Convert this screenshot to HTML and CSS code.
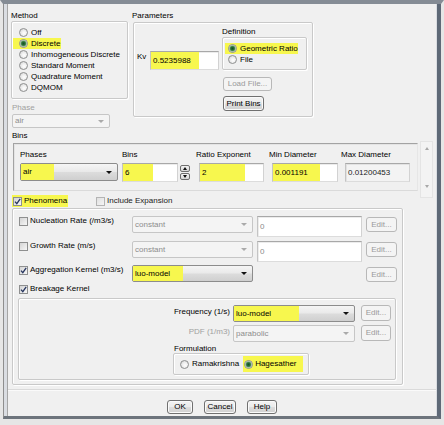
FILE: index.html
```html
<!DOCTYPE html>
<html>
<head>
<meta charset="utf-8">
<link rel="stylesheet" href="styles.css">
</head>
<body>
<div class="window">
  <div class="frame">
    <div class="client">

      <div class="top">
        <div class="col-method">
          <div class="glabel">Method</div>
          <div class="gbox method-box">
            <div class="opt"><span class="radio"></span><span>Off</span></div>
            <div class="opt"><span class="hl hl-radio"><span class="radio on"></span><span>Discrete</span></span></div>
            <div class="opt"><span class="radio"></span><span>Inhomogeneous Discrete</span></div>
            <div class="opt"><span class="radio"></span><span>Standard Moment</span></div>
            <div class="opt"><span class="radio"></span><span>Quadrature Moment</span></div>
            <div class="opt"><span class="radio"></span><span>DQMOM</span></div>
          </div>
          <div class="glabel dis phase-label">Phase</div>
          <div class="combo disabled phase-combo"><span class="ctext">air</span><span class="arrow"></span></div>
        </div>

        <div class="col-params">
          <div class="glabel params-label">Parameters</div>
          <div class="gbox params-box">
            <div class="kv">
              <span class="kv-label">Kv</span>
              <div class="tb kv-tb"><span class="tbhl kv-hl">0.5235988</span></div>
            </div>
            <div class="def">
              <div class="glabel">Definition</div>
              <div class="gbox def-box">
                <div class="opt"><span class="hl hl-radio def-hl"><span class="radio on"></span><span>Geometric Ratio</span></span></div>
                <div class="opt"><span class="radio"></span><span>File</span></div>
              </div>
              <div class="btn disabled load-btn">Load File...</div>
              <div class="btn print-btn">Print Bins</div>
            </div>
          </div>
        </div>
      </div>

      <div class="glabel bins-label">Bins</div>
      <div class="bins-wrap">
        <div class="bins-panel">
          <div class="bcol col-phases">
            <div class="blabel">Phases</div>
            <div class="combo phases-combo"><span class="tbhl phases-hl">air</span><span class="fill"></span><span class="arrow"></span></div>
          </div>
          <div class="bcol col-bins">
            <div class="blabel">Bins</div>
            <div class="tb btb"><span class="tbhl bins-hl">6</span></div>
          </div>
          <div class="spinner">
            <div class="spin"><span class="tri-up"></span></div>
            <div class="spin"><span class="tri-down"></span></div>
          </div>
          <div class="bcol col-ratio">
            <div class="blabel shift3">Ratio Exponent</div>
            <div class="tb btb"><span class="tbhl ratio-hl">2</span></div>
          </div>
          <div class="bcol col-min">
            <div class="blabel shift3">Min Diameter</div>
            <div class="tb btb"><span class="tbhl min-hl">0.001191</span></div>
          </div>
          <div class="bcol col-max">
            <div class="blabel shift4">Max Diameter</div>
            <div class="tb btb ro"><span class="tbtext">0.01200453</span></div>
          </div>
        </div>
        <div class="vscroll"><span class="sarrow-up"></span><span class="sarrow-down"></span></div>
      </div>

      <div class="phen-row">
        <div class="phen-first">
          <span class="hl hl-check"><span class="chk on"><svg viewBox="0 0 7 7" width="7" height="7"><path d="M1 3.6 L2.8 5.6 L6.2 0.8" stroke="#26355f" stroke-width="1.3" fill="none"/></svg></span><span>Phenomena</span></span>
        </div>
        <span class="chk dimchk"></span><span class="inc-text">Include Expansion</span>
      </div>

      <div class="gbox phen-box">
        <div class="prow">
          <div class="pcheck"><span class="chk"></span><span>Nucleation Rate (/m3/s)</span></div>
          <div class="combo disabled pcombo"><span class="ctext">constant</span><span class="arrow"></span></div>
          <div class="tb ptb"><span class="tbtext gray">0</span></div>
          <div class="btn disabled edit-btn">Edit...</div>
        </div>
        <div class="prow row2">
          <div class="pcheck"><span class="chk"></span><span>Growth Rate (m/s)</span></div>
          <div class="combo disabled pcombo"><span class="ctext">constant</span><span class="arrow"></span></div>
          <div class="tb ptb"><span class="tbtext gray">0</span></div>
          <div class="btn disabled edit-btn">Edit...</div>
        </div>
        <div class="prow row3">
          <div class="pcheck"><span class="chk on"><svg viewBox="0 0 7 7" width="7" height="7"><path d="M1 3.6 L2.8 5.6 L6.2 0.8" stroke="#26355f" stroke-width="1.3" fill="none"/></svg></span><span>Aggregation Kernel (m3/s)</span></div>
          <div class="combo pcombo"><span class="tbhl agg-hl">luo-model</span><span class="fill"></span><span class="arrow"></span></div>
          <div class="tb-spacer"></div>
          <div class="btn disabled edit-btn edit3">Edit...</div>
        </div>
        <div class="prow row4">
          <div class="pcheck"><span class="chk on"><svg viewBox="0 0 7 7" width="7" height="7"><path d="M1 3.6 L2.8 5.6 L6.2 0.8" stroke="#26355f" stroke-width="1.3" fill="none"/></svg></span><span>Breakage Kernel</span></div>
        </div>

        <div class="gbox brk-box">
          <div class="brow">
            <div class="blbl">Frequency (1/s)</div>
            <div class="combo bcombo"><span class="tbhl freq-hl">luo-model</span><span class="fill"></span><span class="arrow"></span></div>
            <div class="btn disabled bedit">Edit...</div>
          </div>
          <div class="brow pdf-row">
            <div class="blbl dis">PDF (1/m3)</div>
            <div class="combo disabled bcombo"><span class="ctext">parabolic</span><span class="arrow"></span></div>
            <div class="btn disabled bedit">Edit...</div>
          </div>
          <div class="form-label">Formulation</div>
          <div class="gbox form-box">
            <span class="radio"></span><span class="ram">Ramakrishna</span>
            <span class="hl hl-radio hag-hl"><span class="radio on"></span><span>Hagesather</span></span>
          </div>
        </div>
      </div>

      <div class="footer">
        <div class="btn ok-btn">OK</div>
        <div class="btn cancel-btn">Cancel</div>
        <div class="btn help-btn">Help</div>
      </div>

    </div>
  </div>
</div>
</body>
</html>
```

FILE: styles.css
```css
* { box-sizing: border-box; }
html, body { margin: 0; padding: 0; }
body {
  width: 444px;
  height: 425px;
  overflow: hidden;
  font-family: "Liberation Sans", Arial, sans-serif;
  font-size: 8px;
  line-height: 10px;
  color: #000;
  background: #e9e9e9;
}

/* window frame */
.window {
  width: 444px;
  height: 425px;
  display: flex;
  background: #e9e9e9;
  border-top: 4px solid #858c95;
  border-left: 3px solid #e6e6e6;
  border-right: 3px solid #e6e6e6;
  border-bottom: 6px solid #e6e6e6;
}
.frame {
  flex: 1;
  display: flex;
  background: #dadde2;
  border-left: 1px solid #8e8e8e;
  border-right: 4px solid #5e6977;
  border-bottom: 3px solid #6d747c;
  padding: 0 1px 0 3px;
}
.client {
  flex: 1;
  background: #f0f0f0;
  border-left: 1px solid #a5a5a5;
  overflow: hidden;
}

/* generic */
.glabel { line-height: 10px; height: 10px; white-space: nowrap; }
.dis { color: #a0a0a0; }
.gbox {
  border: 1px solid #c9c9c9;
  border-radius: 2px;
  box-shadow: inset 1px 1px 0 #fff, 1px 1px 0 #fff;
}
.opt { display: flex; align-items: center; height: 11px; white-space: nowrap; }
.hl { background: #f7f74e; }
.radio {
  display: inline-block;
  flex: none;
  width: 9px;
  height: 9px;
  border-radius: 50%;
  border: 1px solid #8e8f8f;
  background: radial-gradient(circle at 60% 60%, #ffffff 0, #f0f0f0 40%, #cfcfcf 100%);
  margin-right: 3px;
}
.radio.on {
  background: radial-gradient(circle, #174d24 0, #276f35 1.6px, #5f9a66 2.6px, #dfe8da 3.4px, #f4f4f4 4px);
}
.hl-radio {
  display: inline-flex;
  align-items: center;
  height: 11px;
  padding: 0 1px 0 6px;
  margin-left: -6px;
}
.chk {
  display: inline-flex;
  align-items: center;
  justify-content: center;
  flex: none;
  width: 9px;
  height: 9px;
  border: 1px solid #8e8f8f;
  background: linear-gradient(135deg, #d4d4d4, #f7f7f7);
  margin-right: 2px;
}
.chk svg { display: block; }
.dimchk { border-color: #b4b4b4; background: linear-gradient(135deg, #e0e0e0, #f5f5f5); }

.tb {
  display: flex;
  align-items: stretch;
  background: #fff;
  border: 1px solid;
  border-color: #a8a8a8 #d2d2d2 #dcdcdc #c4c4c4;
  box-shadow: inset 1px 1px 0 #ececec;
}
.tbhl {
  display: flex;
  align-items: center;
  background: #f7f74e;
  padding-left: 2px;
  white-space: nowrap;
}
.tbtext { display: flex; align-items: center; padding-left: 2px; }
.gray { color: #8a8a8a; }
.ro { background: #f3f3f3; box-shadow: inset 1px 1px 0 #e2e2e2; color: #222; }

.combo {
  display: flex;
  align-items: stretch;
  border: 1px solid #8c8c8c;
  border-radius: 2px;
  background: linear-gradient(#f5f5f5, #e9e9e9 48%, #dcdcdc 52%, #cfcfcf);
}
.combo .fill { flex: 1; }
.combo .ctext { flex: 1; display: flex; align-items: center; padding-left: 2px; }
.arrow {
  align-self: center;
  width: 0;
  height: 0;
  border-left: 3px solid transparent;
  border-right: 3px solid transparent;
  border-top: 3px solid #111;
  margin-right: 5px;
}
.combo.disabled {
  border-color: #c6c6c6;
  background: #f4f4f4;
  color: #8d8d8d;
}
.combo.disabled .arrow { border-top-color: #aaaaaa; }

.btn {
  display: flex;
  align-items: center;
  justify-content: center;
  border: 1px solid #707070;
  border-radius: 3px;
  background: linear-gradient(#f3f3f3, #ebebeb 48%, #dddddd 52%, #d0d0d0);
  white-space: nowrap;
  box-shadow: inset 0 0 0 1px #fafafa;
}
.btn.disabled {
  border-color: #b8b8b8;
  background: #f4f4f4;
  color: #9a9a9a;
  box-shadow: none;
}

/* top area */
.top { display: flex; margin: 7px 0 0 3px; }
.col-method { width: 117px; }
.method-box { padding: 5px 0 5px 7px; height: 78px; }
.phase-label { margin: 4px 0 0 1px; }
.phase-combo { margin: 1px 0 0 1px; width: 98px; height: 14px; }

.col-params { margin-left: 5px; width: 180px; }
.params-label { margin-left: -1px; }
.params-box {
  margin-top: 1px;
  width: 180px;
  height: 95px;
  display: flex;
  align-items: flex-start;
}
.kv { display: flex; margin: 28px 0 0 3px; }
.kv-label { width: 13px; margin-top: 1px; }
.kv-tb { width: 69px; height: 19px; }
.kv-hl { width: 48px; }
.def { margin: 4px 0 0 3px; }
.def-box { width: 85px; height: 33px; padding: 5px 0 4px 5px; }
.def-hl { margin-left: -3px; padding-left: 3px; padding-right: 0; }
.load-btn { margin: 7px 0 0 1px; width: 49px; height: 14px; }
.print-btn { margin: 5px 0 0 1px; width: 41px; height: 15px; }

/* bins */
.bins-label { margin: 3px 0 0 4px; }
.bins-wrap { display: flex; height: 50px; align-items: flex-start; }
.bins-panel {
  margin: 2px 0 0 5px;
  width: 405px;
  height: 48px;
  flex: none;
  border: 1px solid;
  border-color: #a3a3a3 #e6e6e6 #dadada #a3a3a3;
  box-shadow: inset 1px 1px 0 #e4e4e4;
  padding: 6px 0 0 6px;
  display: flex;
  align-items: flex-start;
}
.bcol { display: flex; flex-direction: column; flex: none; }
.blabel { line-height: 10px; height: 10px; margin-bottom: 3px; white-space: nowrap; }
.shift3 { margin-left: -3px; }
.shift4 { margin-left: -4px; }
.col-phases { width: 98px; }
.col-phases .combo { height: 18px; }
.phases-hl { width: 33px; }
.btb { height: 19px; }
.col-bins { width: 56px; margin-left: 4px; }
.bins-hl { width: 30px; }
.spinner { margin: 15px 0 0 2px; width: 10px; flex: none; display: flex; flex-direction: column; gap: 1px; }
.spin {
  height: 7px;
  border: 1px solid #6f6f6f;
  border-radius: 2px;
  background: linear-gradient(#f4f4f4, #d6d6d6);
  display: flex;
  align-items: center;
  justify-content: center;
}
.tri-up, .tri-down { width: 0; height: 0; border-left: 2.5px solid transparent; border-right: 2.5px solid transparent; }
.tri-up { border-bottom: 3px solid #111; }
.tri-down { border-top: 3px solid #111; }
.col-ratio { width: 65px; margin-left: 9px; }
.ratio-hl { width: 45px; }
.col-min { width: 66px; margin-left: 8px; }
.min-hl { width: 47px; }
.col-max { width: 65px; margin-left: 7px; }

.vscroll {
  margin-left: 2px;
  width: 13px;
  height: 57px;
  flex: none;
  border: 1px solid #e4e4e4;
  background: #f3f3f3;
  display: flex;
  flex-direction: column;
  justify-content: space-between;
  align-items: center;
  padding: 5px 0 9px;
}
.sarrow-up, .sarrow-down { width: 0; height: 0; border-left: 2.5px solid transparent; border-right: 2.5px solid transparent; }
.sarrow-up { border-bottom: 3px solid #a8a8a8; }
.sarrow-down { border-top: 3px solid #a8a8a8; }

/* phenomena */
.phen-row { display: flex; align-items: center; height: 12px; margin: 4px 0 0 4px; }
.phen-first { width: 84px; display: flex; align-items: center; }
.hl-check { display: inline-flex; align-items: center; height: 12px; padding: 0 1px 0 1px; }
.inc-text { margin-left: 0; color: #222; }

.phen-box {
  margin: 1px 0 0 4px;
  width: 391px;
  padding: 7px 0 4px 5px;
}
.prow { display: flex; align-items: flex-start; margin-left: 1px; }
.row2 { margin-top: 4px; }
.row3 { margin-top: 3px; }
.row4 { margin-top: 2px; }
.pcheck { width: 113px; display: flex; align-items: center; height: 10px; white-space: nowrap; }
.pcombo { width: 121px; height: 17px; flex: none; }
.ptb { width: 105px; height: 21px; margin-left: 4px; flex: none; }
.tb-spacer { width: 105px; margin-left: 4px; flex: none; }
.edit-btn { width: 31px; height: 15px; margin: 1px 0 0 4px; flex: none; }
.edit3 { margin-top: 2px; }
.agg-hl { width: 50px; }

.brk-box {
  margin-top: 4px;
  width: 378px;
  padding: 6px 0 4px 154px;
}
.brow { display: flex; align-items: flex-start; height: 17px; }
.pdf-row { margin-top: 3px; }
.blbl { width: 57px; text-align: right; margin-top: 2px; white-space: nowrap; }
.bcombo { width: 122px; height: 17px; margin-left: 3px; flex: none; }
.freq-hl { width: 65px; }
.bedit { width: 30px; height: 16px; margin-left: 6px; flex: none; }
.form-label { margin-top: 3px; line-height: 8px; height: 8px; padding-left: 1px; }
.form-box {
  width: 136px;
  height: 22px;
  display: flex;
  align-items: center;
  padding-left: 6px;
}
.ram { margin-right: 4px; }
.hag-hl { margin-left: 0; padding: 0 6px 0 1px; height: 16px; }
.hag-hl .radio { margin-right: 2px; }

/* footer */
.footer {
  margin-top: 4px;
  border-top: 1px solid #dadada;
  box-shadow: inset 0 1px 0 #fafafa;
  padding-top: 10px;
  display: flex;
  justify-content: center;
  gap: 11px;
}
.ok-btn { width: 26px; height: 14px; }
.cancel-btn { width: 32px; height: 14px; }
.help-btn { width: 30px; height: 14px; }
```
